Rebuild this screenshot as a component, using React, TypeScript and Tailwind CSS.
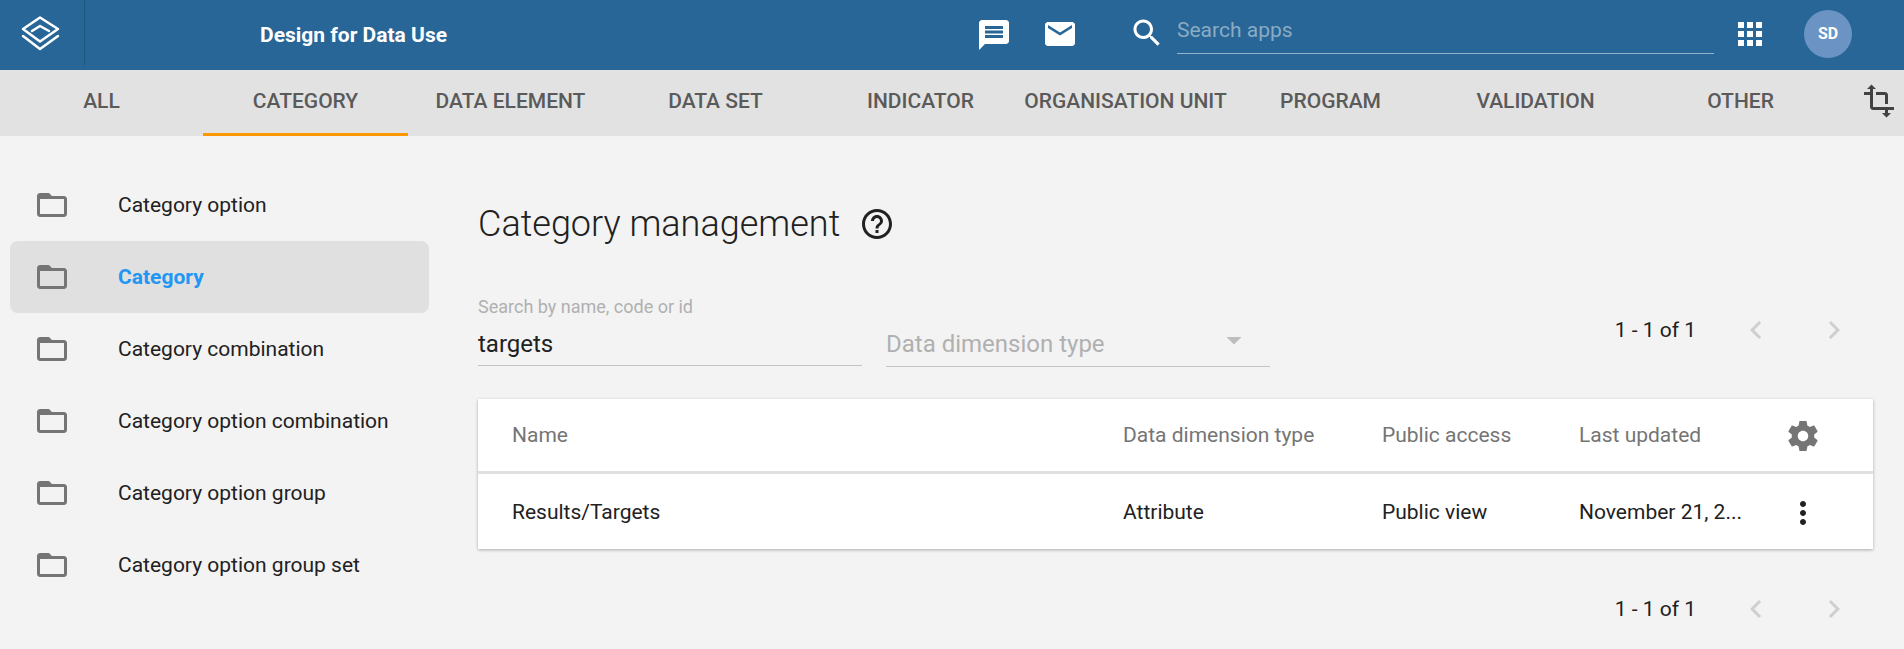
const PATHS = {
  folder: 'M20 6h-8l-2-2H4c-1.1 0-1.99.9-1.99 2L2 18c0 1.1.9 2 2 2h16c1.1 0 2-.9 2-2V8c0-1.1-.9-2-2-2zm0 12H4V8h16v10z',
  message: 'M20 2H4c-1.1 0-1.99.9-1.99 2L2 22l4-4h14c1.1 0 2-.9 2-2V4c0-1.1-.9-2-2-2zm-2 12H6v-2h12v2zm0-3H6V9h12v2zm0-3H6V6h12v2z',
  email: 'M20 4H4c-1.1 0-1.99.9-1.99 2L2 18c0 1.1.9 2 2 2h16c1.1 0 2-.9 2-2V6c0-1.1-.9-2-2-2zm0 4l-8 5-8-5V6l8 5 8-5v2z',
  search: 'M15.5 14h-.79l-.28-.27C15.41 12.59 16 11.11 16 9.5 16 5.91 13.09 3 9.5 3S3 5.91 3 9.5 5.91 16 9.5 16c1.61 0 3.09-.59 4.23-1.57l.27.28v.79l5 4.99L20.49 19l-4.99-5zm-6 0C7.01 14 5 11.99 5 9.5S7.01 5 9.5 5 14 7.01 14 9.5 11.99 14 9.5 14z',
  apps: 'M4 8h4V4H4v4zm6 12h4v-4h-4v4zm-6 0h4v-4H4v4zm0-6h4v-4H4v4zm6 0h4v-4h-4v4zm6-10v4h4V4h-4zm-6 4h4V4h-4v4zm6 6h4v-4h-4v4zm0 6h4v-4h-4v4z',
  transform: 'M22 18v-2H8V4h2L7 1 4 4h2v2H2v2h4v8c0 1.1.9 2 2 2h8v2h-2l3 3 3-3h-2v-2h4zM10 8h6v6h2V8c0-1.1-.9-2-2-2h-6v2z',
  help: 'M11 18h2v-2h-2v2zm1-16C6.48 2 2 6.48 2 12s4.48 10 10 10 10-4.48 10-10S17.52 2 12 2zm0 18c-4.41 0-8-3.59-8-8s3.59-8 8-8 8 3.59 8 8-3.59 8-8 8zm0-14c-2.21 0-4 1.79-4 4h2c0-1.1.9-2 2-2s2 .9 2 2c0 2-3 1.75-3 5h2c0-2.25 3-2.5 3-5 0-2.21-1.79-4-4-4z',
  settings: 'M19.43 12.98c.04-.32.07-.64.07-.98s-.03-.66-.07-.98l2.11-1.65c.19-.15.24-.42.12-.64l-2-3.46c-.12-.22-.39-.3-.61-.22l-2.49 1c-.52-.4-1.08-.73-1.69-.98l-.38-2.65C14.46 2.18 14.25 2 14 2h-4c-.25 0-.46.18-.49.42l-.38 2.65c-.61.25-1.17.59-1.69.98l-2.49-1c-.23-.09-.49 0-.61.22l-2 3.46c-.13.22-.07.49.12.64l2.11 1.65c-.04.32-.07.65-.07.98s.03.66.07.98l-2.11 1.65c-.19.15-.24.42-.12.64l2 3.46c.12.22.39.3.61.22l2.49-1c.52.4 1.08.73 1.69.98l.38 2.65c.03.24.24.42.49.42h4c.25 0 .46-.18.49-.42l.38-2.65c.61-.25 1.17-.59 1.69-.98l2.49 1c.23.09.49 0 .61-.22l2-3.46c.12-.22.07-.49-.12-.64l-2.11-1.65zM12 15.5c-1.93 0-3.5-1.57-3.5-3.5s1.57-3.5 3.5-3.5 3.5 1.57 3.5 3.5-1.57 3.5-3.5 3.5z',
  more: 'M12 8c1.1 0 2-.9 2-2s-.9-2-2-2-2 .9-2 2 .9 2 2 2zm0 2c-1.1 0-2 .9-2 2s.9 2 2 2 2-.9 2-2-.9-2-2-2zm0 6c-1.1 0-2 .9-2 2s.9 2 2 2 2-.9 2-2-.9-2-2-2z',
  left: 'M15.41 7.41L14 6l-6 6 6 6 1.41-1.41L10.83 12z',
  right: 'M10 6L8.59 7.41 13.17 12l-4.58 4.59L10 18l6-6z',
  drop: 'M7 10l5 5 5-5z',
}

function Icon({ d, className }: { d: string; className: string }) {
  return (
    <svg viewBox="0 0 24 24" className={`h-9 w-9 shrink-0 fill-current ${className}`}>
      <path d={d} />
    </svg>
  )
}

const TABS = ['ALL', 'CATEGORY', 'DATA ELEMENT', 'DATA SET', 'INDICATOR', 'ORGANISATION UNIT', 'PROGRAM', 'VALIDATION', 'OTHER']
const SIDE_ITEMS = [
  'Category option',
  'Category',
  'Category combination',
  'Category option combination',
  'Category option group',
  'Category option group set',
]

function Logo() {
  return (
    <svg viewBox="0 0 40 40" className="h-10 w-10 fill-none stroke-white stroke-[2.5]">
      <path d="M20 4.5 L38 16 L20 28.5 L3 16 Z" strokeLinejoin="round" />
      <path d="M12 18 L20 13 L29 18" strokeLinejoin="round" strokeLinecap="round" />
      <path d="M3 23 L20 36 L38 23" strokeLinejoin="round" strokeLinecap="round" />
    </svg>
  )
}

function Header() {
  return (
    <header className="flex h-[70px] items-center bg-[#276696] text-white">
      <div className="flex h-[65px] w-[85px] shrink-0 items-center self-start border-r border-[#1f5680] pl-5">
        <Logo />
      </div>
      <div className="w-[641px] shrink-0 pt-[1px] pl-[175px] text-[21px] font-bold">Design for Data Use</div>
      <Icon d={PATHS.message} className="-mt-[1px] ml-[250px]" />
      <Icon d={PATHS.email} className="-mt-[3px] ml-[30px]" />
      <Icon d={PATHS.search} className="-mt-[4px] ml-[51px]" />
      <div className="-mt-[2px] ml-[12px] h-[40px] w-[537px] border-b border-[#93b3cb] text-[21px] leading-[32px] text-[#8aabc4]">
        Search apps
      </div>
      <Icon d={PATHS.apps} className="-mt-[3px] ml-[18px]" />
      <div className="-mt-[3px] ml-[36px] flex h-12 w-12 items-center justify-center rounded-full bg-[#6b94c4] text-[16px] font-bold">
        SD
      </div>
    </header>
  )
}

function TabBar() {
  return (
    <nav className="flex h-[66px] items-stretch bg-[#e2e2e2] text-[#5a5a5a]">
      {TABS.map((tab, i) => (
        <div
          key={tab}
          className={`flex items-center justify-center border-b-[3px] text-[21px] font-medium ${
            i === 0 ? 'w-[203px]' : 'w-[205px]'
          } ${tab === 'CATEGORY' ? 'border-[#ff9800]' : 'border-transparent'}`}
        >
          {tab}
        </div>
      ))}
      <div className="flex flex-1 items-center pb-[4px] pl-[18px] text-[#424242]">
        <Icon d={PATHS.transform} className="" />
      </div>
    </nav>
  )
}

function Sidebar() {
  return (
    <aside className="w-[419px] shrink-0 pt-[33px]">
      {SIDE_ITEMS.map((item) => {
        const active = item === 'Category'
        return (
          <div
            key={item}
            className={`flex h-[72px] items-center rounded-lg pl-[24px] text-[21px] ${
              active ? 'bg-[#e0e0e0] font-bold text-[#2196f3]' : 'text-[#212121]'
            }`}
          >
            <Icon d={PATHS.folder} className="text-[#757575]" />
            <span className="ml-[48px] pt-[2px]">{item}</span>
          </div>
        )
      })}
    </aside>
  )
}

function Pager() {
  return (
    <div className="flex items-center text-[21px] text-[#212121]">
      <span className="pt-[1px]">1 - 1 of 1</span>
      <Icon d={PATHS.left} className="ml-[42px] text-[#cfcfcf]" />
      <Icon d={PATHS.right} className="ml-[42px] text-[#cfcfcf]" />
    </div>
  )
}

function Content() {
  return (
    <main className="ml-[49px] w-[1395px]">
      <div className="mt-[53px] flex h-[70px] items-center">
        <h1 className="text-[36px] font-light text-[#212121]">Category management</h1>
        <Icon d={PATHS.help} className="ml-[19px] text-[#212121]" />
      </div>

      <div className="mt-[32px] flex h-[110px] items-start">
        <div className="w-[384px] border-b border-[#c4c4c4]">
          <div className="h-[28px] pt-[6px] text-[18px] leading-[20px] text-[#b0b0b0]">Search by name, code or id</div>
          <div className="h-[46px] pt-[11px] text-[24px] leading-[28px] text-[#212121]">targets</div>
        </div>
        <div className="relative ml-[24px] w-[384px] border-b border-[#c4c4c4]">
          <div className="h-[75px] pt-[39px] text-[24px] leading-[28px] text-[#b0b0b0]">Data dimension type</div>
          <Icon d={PATHS.drop} className="absolute top-[31px] right-[18px] text-[#bdbdbd]" />
        </div>
        <div className="ml-auto pt-[21px] pr-[21px]">
          <Pager />
        </div>
      </div>

      <div className="mt-[-2px] bg-white text-[21px] shadow-[0_1px_3px_rgba(0,0,0,0.3)]">
        <div className="flex h-[75px] items-center border-b-[3px] border-[#e0e0e0] pt-[1px] text-[#757575]">
          <span className="ml-[34px] w-[611px]">Name</span>
          <span className="w-[259px]">Data dimension type</span>
          <span className="w-[197px]">Public access</span>
          <span className="w-[206px]">Last updated</span>
          <Icon d={PATHS.settings} className="text-[#757575]" />
        </div>
        <div className="flex h-[75px] items-center pt-[3px] text-[#212121]">
          <span className="ml-[34px] w-[611px]">Results/Targets</span>
          <span className="w-[259px]">Attribute</span>
          <span className="w-[197px]">Public view</span>
          <span className="w-[206px]">November 21, 2...</span>
          <Icon d={PATHS.more} className="text-[#212121]" />
        </div>
      </div>

      <div className="mt-[42px] flex justify-end pr-[21px]">
        <Pager />
      </div>
    </main>
  )
}

export default function App() {
  return (
    <div className="h-[649px] overflow-hidden bg-[#f3f3f3] font-['Roboto',sans-serif]">
      <Header />
      <TabBar />
      <div className="flex pl-[10px]">
        <Sidebar />
        <Content />
      </div>
    </div>
  )
}
